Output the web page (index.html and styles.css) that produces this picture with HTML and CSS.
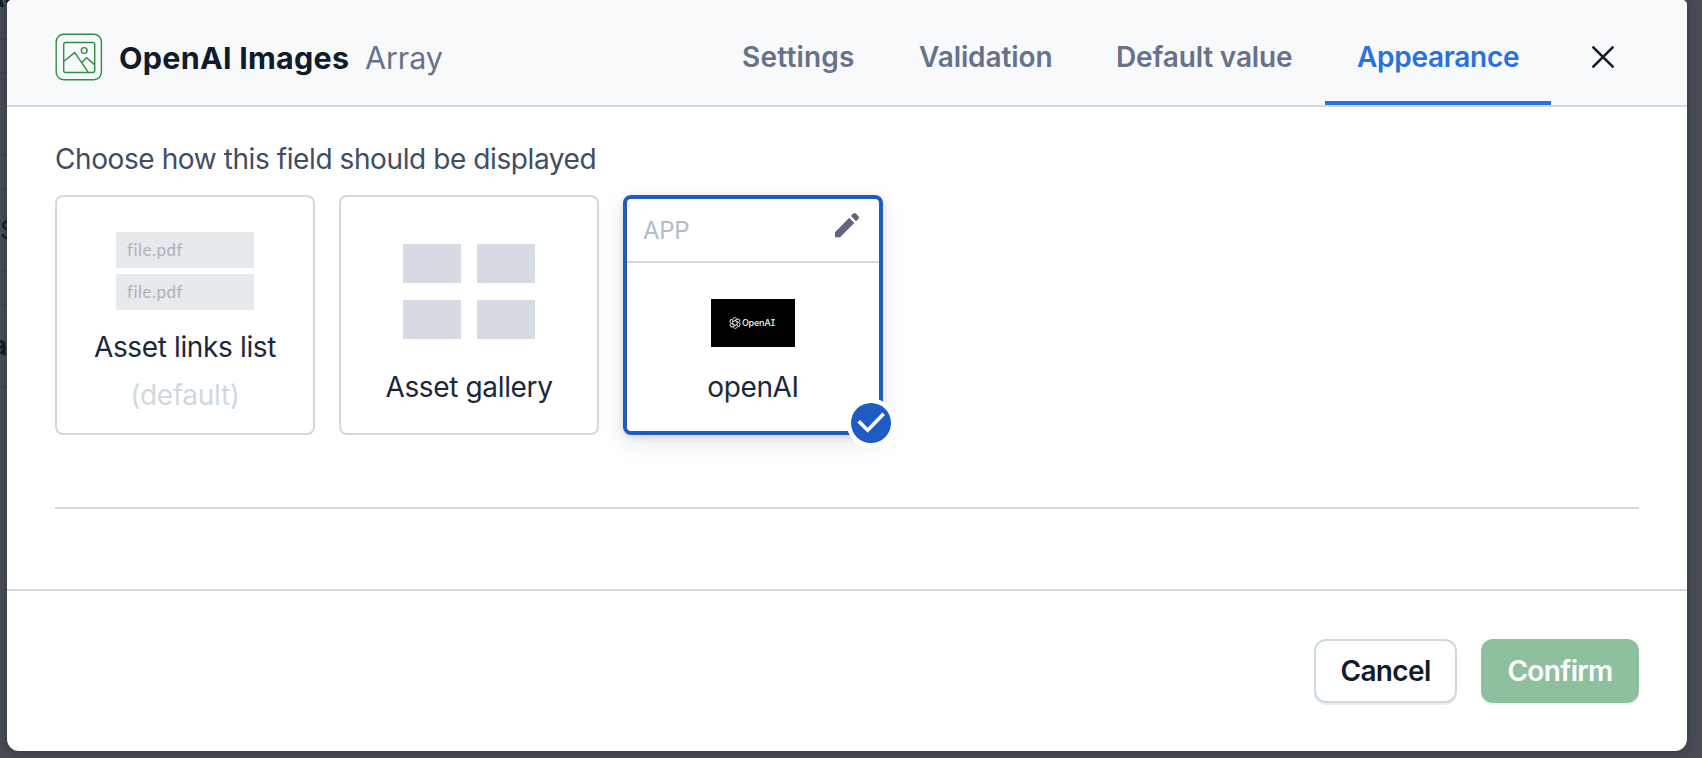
FILE: index.html
```html
<!DOCTYPE html>
<html lang="en">
<head>
<meta charset="utf-8">
<title>OpenAI Images</title>
<link rel="stylesheet" href="styles.css">
</head>
<body>
<div class="backdrop" aria-hidden="true">
  <span class="bg-text bg-text-top">Ac</span>
  <span class="bg-text bg-text-mid">S</span>
  <span class="bg-text bg-text-low">a</span>
  <i class="rule rule-1"></i><i class="rule rule-2"></i><i class="rule rule-3"></i><i class="rule rule-4"></i><i class="rule rule-5"></i><i class="rule rule-6"></i><i class="rule rule-7"></i>
</div>
<main class="modal">
  <header class="head">
    <svg class="field-icon" width="48" height="48" viewBox="0 0 48 48" fill="none" stroke="#2f8f43" stroke-width="1.4">
      <rect x="1.2" y="1.2" width="45.2" height="45.6" rx="7.5"/>
      <rect x="8.7" y="9.5" width="31" height="30" rx="2"/>
      <circle cx="29.2" cy="17.5" r="2.9"/>
      <path d="M9 28.3 19.7 19.6 33 38.8M26.800 29.500 31.600 24.700 39.500 31.600"/>
    </svg>
    <h1 class="title">OpenAI Images</h1>
    <span class="type">Array</span>
    <nav class="tabs">
      <a class="tab tab-settings">Settings</a>
      <a class="tab tab-validation">Validation</a>
      <a class="tab tab-default">Default value</a>
      <a class="tab tab-appearance active">Appearance</a>
    </nav>
    <svg class="close" width="24" height="24" viewBox="0 0 24 24" fill="none" stroke="#111b2b" stroke-width="2.6" stroke-linecap="round"><path d="M2.300 2.300 21.700 21.700M21.700 2.300 2.300 21.700"/></svg>
  </header>
  <section class="content">
    <p class="label">Choose how this field should be displayed</p>
    <div class="cards">
      <div class="card list-card">
        <div class="files"><span class="file">file.pdf</span><span class="file">file.pdf</span></div>
        <span class="name name-list">Asset links list</span>
        <span class="default">(default)</span>
      </div>
      <div class="card gallery-card">
        <div class="tiles"><i></i><i></i><i></i><i></i></div>
        <span class="name name-gallery">Asset gallery</span>
      </div>
      <div class="card app-card">
        <div class="app-head">
          <span class="app">APP</span>
          <svg class="pencil" width="26" height="26" viewBox="0 0 26 26" fill="#5f6780"><path d="M1 20.200V25.200H6L20.300 10.900 15.200 5.800ZM24.500 6.700C25.200 6 25.200 5 24.500 4.300L21.800 1.600C21.100 .9 20.100 .9 19.400 1.600L16.900 4.100 22 9.200Z"/></svg>
        </div>
        <div class="logo">
          <svg width="12" height="12" viewBox="0 0 24 24" fill="none" stroke="#d8d8d8" stroke-width="2">
            <g id="petal"><path d="M12 7 7.500 9.600V4.800C7.500 1 13 0 15.300 3"/></g>
            <use href="#petal" transform="rotate(60 12 12)"/><use href="#petal" transform="rotate(120 12 12)"/><use href="#petal" transform="rotate(180 12 12)"/><use href="#petal" transform="rotate(240 12 12)"/><use href="#petal" transform="rotate(300 12 12)"/>
          </svg>
          <span class="logo-text">OpenA<span class="slab">I</span></span>
        </div>
        <span class="name name-app">openAI</span>
        <svg class="check" width="50" height="50" viewBox="0 0 50 50" fill="none"><circle cx="25" cy="25" r="24.500" fill="#fff"/><circle cx="25" cy="25" r="20" fill="#205bc4"/><path d="M12.700 23.200 21.700 32.300 37.700 15.800" stroke="#fff" stroke-width="3.600"/></svg>
      </div>
    </div>
    <hr class="divider">
  </section>
  <footer class="foot">
    <button class="btn cancel">Cancel</button>
    <button class="btn confirm">Confirm</button>
  </footer>
</main>
</body>
</html>
```

FILE: styles.css
```css
* { box-sizing: border-box; }
body {
  margin: 0;
  height: 758px;
  overflow: hidden;
  background: #454b51;
  font-family: Inter, "Liberation Sans", sans-serif;
  color: #1b273a;
}
.backdrop { position: absolute; inset: 0; }
.bg-text { position: absolute; font-size: 26px; line-height: 30px; color: #111b2b; }
.bg-text-top { left: -14px; top: -17px; font-weight: 600; }
.bg-text-mid { left: 0; top: 215px; }
.bg-text-low { left: -8px; top: 331px; font-weight: 700; }
.rule { position: absolute; left: 0; width: 7px; height: 2px; background: #3d414d; }
.rule-1 { top: 38px; }
.rule-2 { top: 72px; }
.rule-3 { top: 154px; }
.rule-4 { top: 188px; }
.rule-5 { top: 270px; }
.rule-6 { top: 304px; }
.rule-7 { top: 386px; }
.modal {
  position: relative;
  display: flex;
  flex-direction: column;
  width: 1680px;
  height: 751px;
  margin-left: 7px;
  background: #fff;
  border-radius: 5px 5px 12px 12px;
  box-shadow: 0 1px 6px rgba(12, 20, 28, .3);
  overflow: hidden;
}
.head {
  display: flex;
  align-items: center;
  height: 107px;
  padding: 0 72px 0 48px;
  background: #f7f9fb;
  border-bottom: 2px solid #cfd9e0;
}
.field-icon { margin-top: 9px; }
.title { margin: 10px 0 0 16px; width: 230px; font-size: 30.5px; line-height: 36px; font-weight: 650; color: #111b2b; letter-spacing: .25px; white-space: nowrap; }
.type { margin: 10px 0 0 16px; font-size: 30.5px; line-height: 36px; letter-spacing: -.1px; color: #67728a; }
.tabs { display: flex; margin-left: auto; height: 105px; }
.tab { padding: 0 0 0 32px; line-height: 114px; font-size: 28px; font-weight: 600; color: #67728a; white-space: nowrap; }
.tab-settings { width: 177px; letter-spacing: .2px; }
.tab-validation { width: 197px; letter-spacing: -.1px; }
.tab-default { width: 241px; letter-spacing: -.15px; }
.tab-appearance { width: 226px; letter-spacing: -.3px; }
.active { color: #2a70de; border-bottom: 4px solid #2a70de; }
.close { margin: 9px 0 0 40px; }
.content { height: 482px; padding: 34px 48px 0; }
.label { margin: 0; font-size: 28px; line-height: 36px; letter-spacing: -.41px; color: #414d63; white-space: nowrap; }
.cards { display: flex; gap: 24px; margin-top: 18px; }
.card {
  position: relative;
  display: flex;
  flex-direction: column;
  align-items: center;
  width: 260px;
  height: 240px;
  border: 2px solid #cfd9e0;
  border-radius: 8px;
}
.name { font-size: 28px; line-height: 36px; letter-spacing: -.36px; white-space: nowrap; }
.files { display: grid; gap: 6px; margin-top: 35px; }
.file { width: 138px; height: 36px; padding-left: 11px; background: #e6eaed; font: 17px/36px Lato, sans-serif; letter-spacing: .5px; font-variant-ligatures: none; color: #adb2b8; }
.name-list { margin-top: 19px; }
.default { margin-top: 12px; font-size: 28px; line-height: 36px; letter-spacing: -.3px; color: #cfd9e0; }
.tiles { display: grid; grid-template: 39px 39px / 58px 58px; gap: 17px 16px; margin-top: 47px; }
.tiles i { background: #d6dae2; }
.name-gallery { margin-top: 30px; }
.app-card { border: 4px solid #205bc4; box-shadow: 0 2px 6px rgba(15, 25, 40, .14), 0 8px 24px rgba(15, 25, 40, .1); }
.app-head { display: flex; justify-content: space-between; width: 252px; height: 64px; padding: 13px 19px 0 16px; border-bottom: 2px solid #cfd9e0; }
.app { margin-top: 1px; font-size: 24px; line-height: 36px; letter-spacing: -.3px; color: #aebdca; }
.logo { display: flex; align-items: center; width: 84px; height: 48px; margin-top: 36px; padding-left: 18px; background: #000; }
.logo-text { margin-left: 1px; font: 600 9px/12px Inter, sans-serif; letter-spacing: -.3px; color: #ddd; }
.slab { font-family: "DejaVu Sans Mono", monospace; font-size: 8px; }
.name-app { margin-top: 22px; }
.check { position: absolute; left: 219px; top: 199px; }
.divider { height: 2px; margin: 72px 0 0; border: 0; background: #cfd9e0; }
.foot { display: flex; justify-content: flex-end; gap: 24px; flex: 1; padding: 48px 48px 0; border-top: 2px solid #cfd9e0; }
.btn { height: 64px; padding: 0; border-radius: 12px; font: 600 28px/36px Inter, sans-serif; letter-spacing: -.65px; white-space: nowrap; }
.cancel { width: 143px; border: 2px solid #cfd9e0; background: #fff; color: #111b2b; box-shadow: 0 2px 0 #e9eef2; }
.confirm { width: 158px; border: 0; background: #8ebf9f; color: #fff; box-shadow: 0 2px 0 #f0f3f5; }
```
